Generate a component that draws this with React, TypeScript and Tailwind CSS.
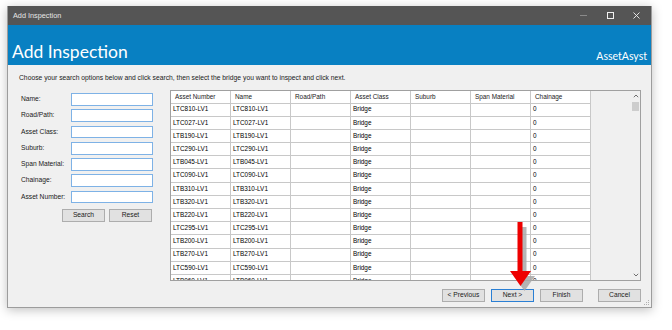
import React from "react";

const rows = [
  "LTC810-LV1",
  "LTC027-LV1",
  "LTB190-LV1",
  "LTC290-LV1",
  "LTB045-LV1",
  "LTC090-LV1",
  "LTB310-LV1",
  "LTB320-LV1",
  "LTB220-LV1",
  "LTC295-LV1",
  "LTB200-LV1",
  "LTB270-LV1",
  "LTC590-LV1",
  "LTB060-LV1",
];

const headers = ["Asset Number", "Name", "Road/Path", "Asset Class", "Suburb", "Span Material", "Chainage"];

const fields = ["Name:", "Road/Path:", "Asset Class:", "Suburb:", "Span Material:", "Chainage:", "Asset Number:"];

function Btn({ label, focused }: { label: string; focused?: boolean }) {
  return (
    <div
      className={`w-[43px] h-[12.5px] flex items-center justify-center text-[6.7px] leading-none text-[#1a1a1a] bg-[#e1e1e1] border ${
        focused ? "border-[#2a7fd4]" : "border-[#adadad]"
      }`}
    >
      {label}
    </div>
  );
}

export default function App() {
  return (
    <div
      className="w-[672px] h-[330px] bg-white pt-[6px] pl-[7px]"
      style={{ fontFamily: '"Liberation Sans", Arial, sans-serif' }}
    >
      <div className="relative w-[645px] h-[302px] flex flex-col border-x border-b border-[#9c9c9c] bg-[#f0f0f0] shadow-[0_2px_10px_rgba(0,0,0,0.25)]">
        {/* Title bar */}
        <div className="h-[19px] bg-[#555555] flex items-center justify-between pl-[5px]">
          <span className="text-[7.3px] leading-none text-[#e6e6e6]">Add Inspection</span>
          <div className="flex items-center h-full">
            <div className="w-[27px] h-full flex items-center justify-center">
              <div className="w-[7px] h-px bg-[#8a8a8a]" />
            </div>
            <div className="w-[27px] h-full flex items-center justify-center">
              <div className="w-[6.5px] h-[6.5px] border border-[#f0f0f0]" />
            </div>
            <div className="w-[27px] h-full flex items-center justify-center pr-[2px]">
              <svg width="7" height="7" viewBox="0 0 7 7">
                <path d="M0.5 0.5 L6.5 6.5 M6.5 0.5 L0.5 6.5" stroke="#f0f0f0" strokeWidth="0.9" />
              </svg>
            </div>
          </div>
        </div>

        {/* Blue header */}
        <div
          className="h-[40px] bg-[#0880c2] flex items-end justify-between pl-[4px] pr-[4px]"
          style={{ fontFamily: 'Lato, "Open Sans", sans-serif' }}
        >
          <span className="text-[17.5px] leading-none text-white pb-[5px]">Add Inspection</span>
          <span className="text-[10.5px] leading-none text-white pb-[4px]">AssetAsyst</span>
        </div>

        {/* Content */}
        <div className="flex-1 flex flex-col pl-[11px] pr-[10px]">
          <div className="mt-[6px] h-[13px] text-[6.75px] leading-[13px] text-[#1a1a1a] whitespace-nowrap">
            Choose your search options below and click search, then select the bridge you want to inspect and click next.
          </div>

          <div className="mt-[6px] flex">
            {/* Form */}
            <div className="w-[151px] pl-[2px] pt-[3px] flex flex-col">
              {fields.map((f) => (
                <div key={f} className="h-[16.3px] flex items-start">
                  <div className="w-[50px] h-[12.7px] flex items-center text-[6.7px] leading-none text-[#1a1a1a] whitespace-nowrap">
                    {f}
                  </div>
                  <div className="w-[82px] h-[12.7px] bg-white border border-[#7eb2e6]" />
                </div>
              ))}
              <div className="mt-[2px] pl-[41px] flex gap-[4px]">
                <Btn label="Search" />
                <Btn label="Reset" />
              </div>
            </div>

            {/* Grid */}
            <div className="w-[471px] h-[191px] border border-[#a0a0a0] flex bg-[#f0f0f0]">
              <div className="flex-1 flex flex-col overflow-hidden">
                <div className="flex h-[12.5px] shrink-0">
                  {headers.map((h) => (
                    <div
                      key={h}
                      className="w-[60px] shrink-0 h-full bg-white border-r border-b border-[#c8c8c8] pl-[4px] flex items-center text-[6.4px] leading-none text-[#1a1a1a] whitespace-nowrap"
                    >
                      {h}
                    </div>
                  ))}
                </div>
                {rows.map((r) => (
                  <div key={r} className="flex h-[13.2px] shrink-0">
                    {[r, r, "", "Bridge", "", "", "0"].map((c, i) => (
                      <div
                        key={i}
                        className="w-[60px] shrink-0 h-full bg-white border-r border-b border-[#c8c8c8] pl-[2px] flex items-center text-[6.4px] leading-none text-black whitespace-nowrap"
                      >
                        {c}
                      </div>
                    ))}
                  </div>
                ))}
              </div>
              {/* Scrollbar */}
              <div className="w-[9px] h-full bg-[#f0f0f0] flex flex-col items-center">
                <div className="h-[10px] flex items-center justify-center">
                  <svg width="6" height="4" viewBox="0 0 6 4">
                    <path d="M0.8 3.2 L3 1 L5.2 3.2" stroke="#606060" strokeWidth="0.9" fill="none" />
                  </svg>
                </div>
                <div className="mt-[1px] w-[7px] h-[9px] bg-[#cdcdcd]" />
                <div className="flex-1" />
                <div className="h-[10px] flex items-center justify-center">
                  <svg width="6" height="4" viewBox="0 0 6 4">
                    <path d="M0.8 0.8 L3 3 L5.2 0.8" stroke="#606060" strokeWidth="0.9" fill="none" />
                  </svg>
                </div>
              </div>
            </div>
          </div>

          {/* Bottom buttons */}
          <div className="mt-[8px] flex justify-end">
            <div className="flex gap-[6px]">
              <Btn label="< Previous" />
              <Btn label="Next >" focused />
              <Btn label="Finish" />
            </div>
            <div className="ml-[15px]">
              <Btn label="Cancel" />
            </div>
          </div>
        </div>

        {/* Resize grip */}
        <svg className="absolute right-[1px] bottom-[1px]" width="6" height="6" viewBox="0 0 6 6">
          <rect x="4" y="0" width="1" height="1" fill="#b0b0b0" />
          <rect x="2" y="2" width="1" height="1" fill="#b0b0b0" />
          <rect x="4" y="2" width="1" height="1" fill="#b0b0b0" />
          <rect x="0" y="4" width="1" height="1" fill="#b0b0b0" />
          <rect x="2" y="4" width="1" height="1" fill="#b0b0b0" />
          <rect x="4" y="4" width="1" height="1" fill="#b0b0b0" />
        </svg>
      </div>

      {/* Red arrow annotation overlay */}
      <svg className="absolute left-[500px] top-[215px]" width="45" height="90" viewBox="0 0 45 90">
        <g fill="#a9a9a9" opacity="0.85">
          <rect x="21.5" y="12" width="5" height="50" />
          <polygon points="14,61 35,61 24.5,76" />
        </g>
        <g fill="#ee0000">
          <rect x="17.5" y="7" width="5" height="50" />
          <polygon points="10,56 31,56 20.5,71" />
        </g>
      </svg>
    </div>
  );
}
